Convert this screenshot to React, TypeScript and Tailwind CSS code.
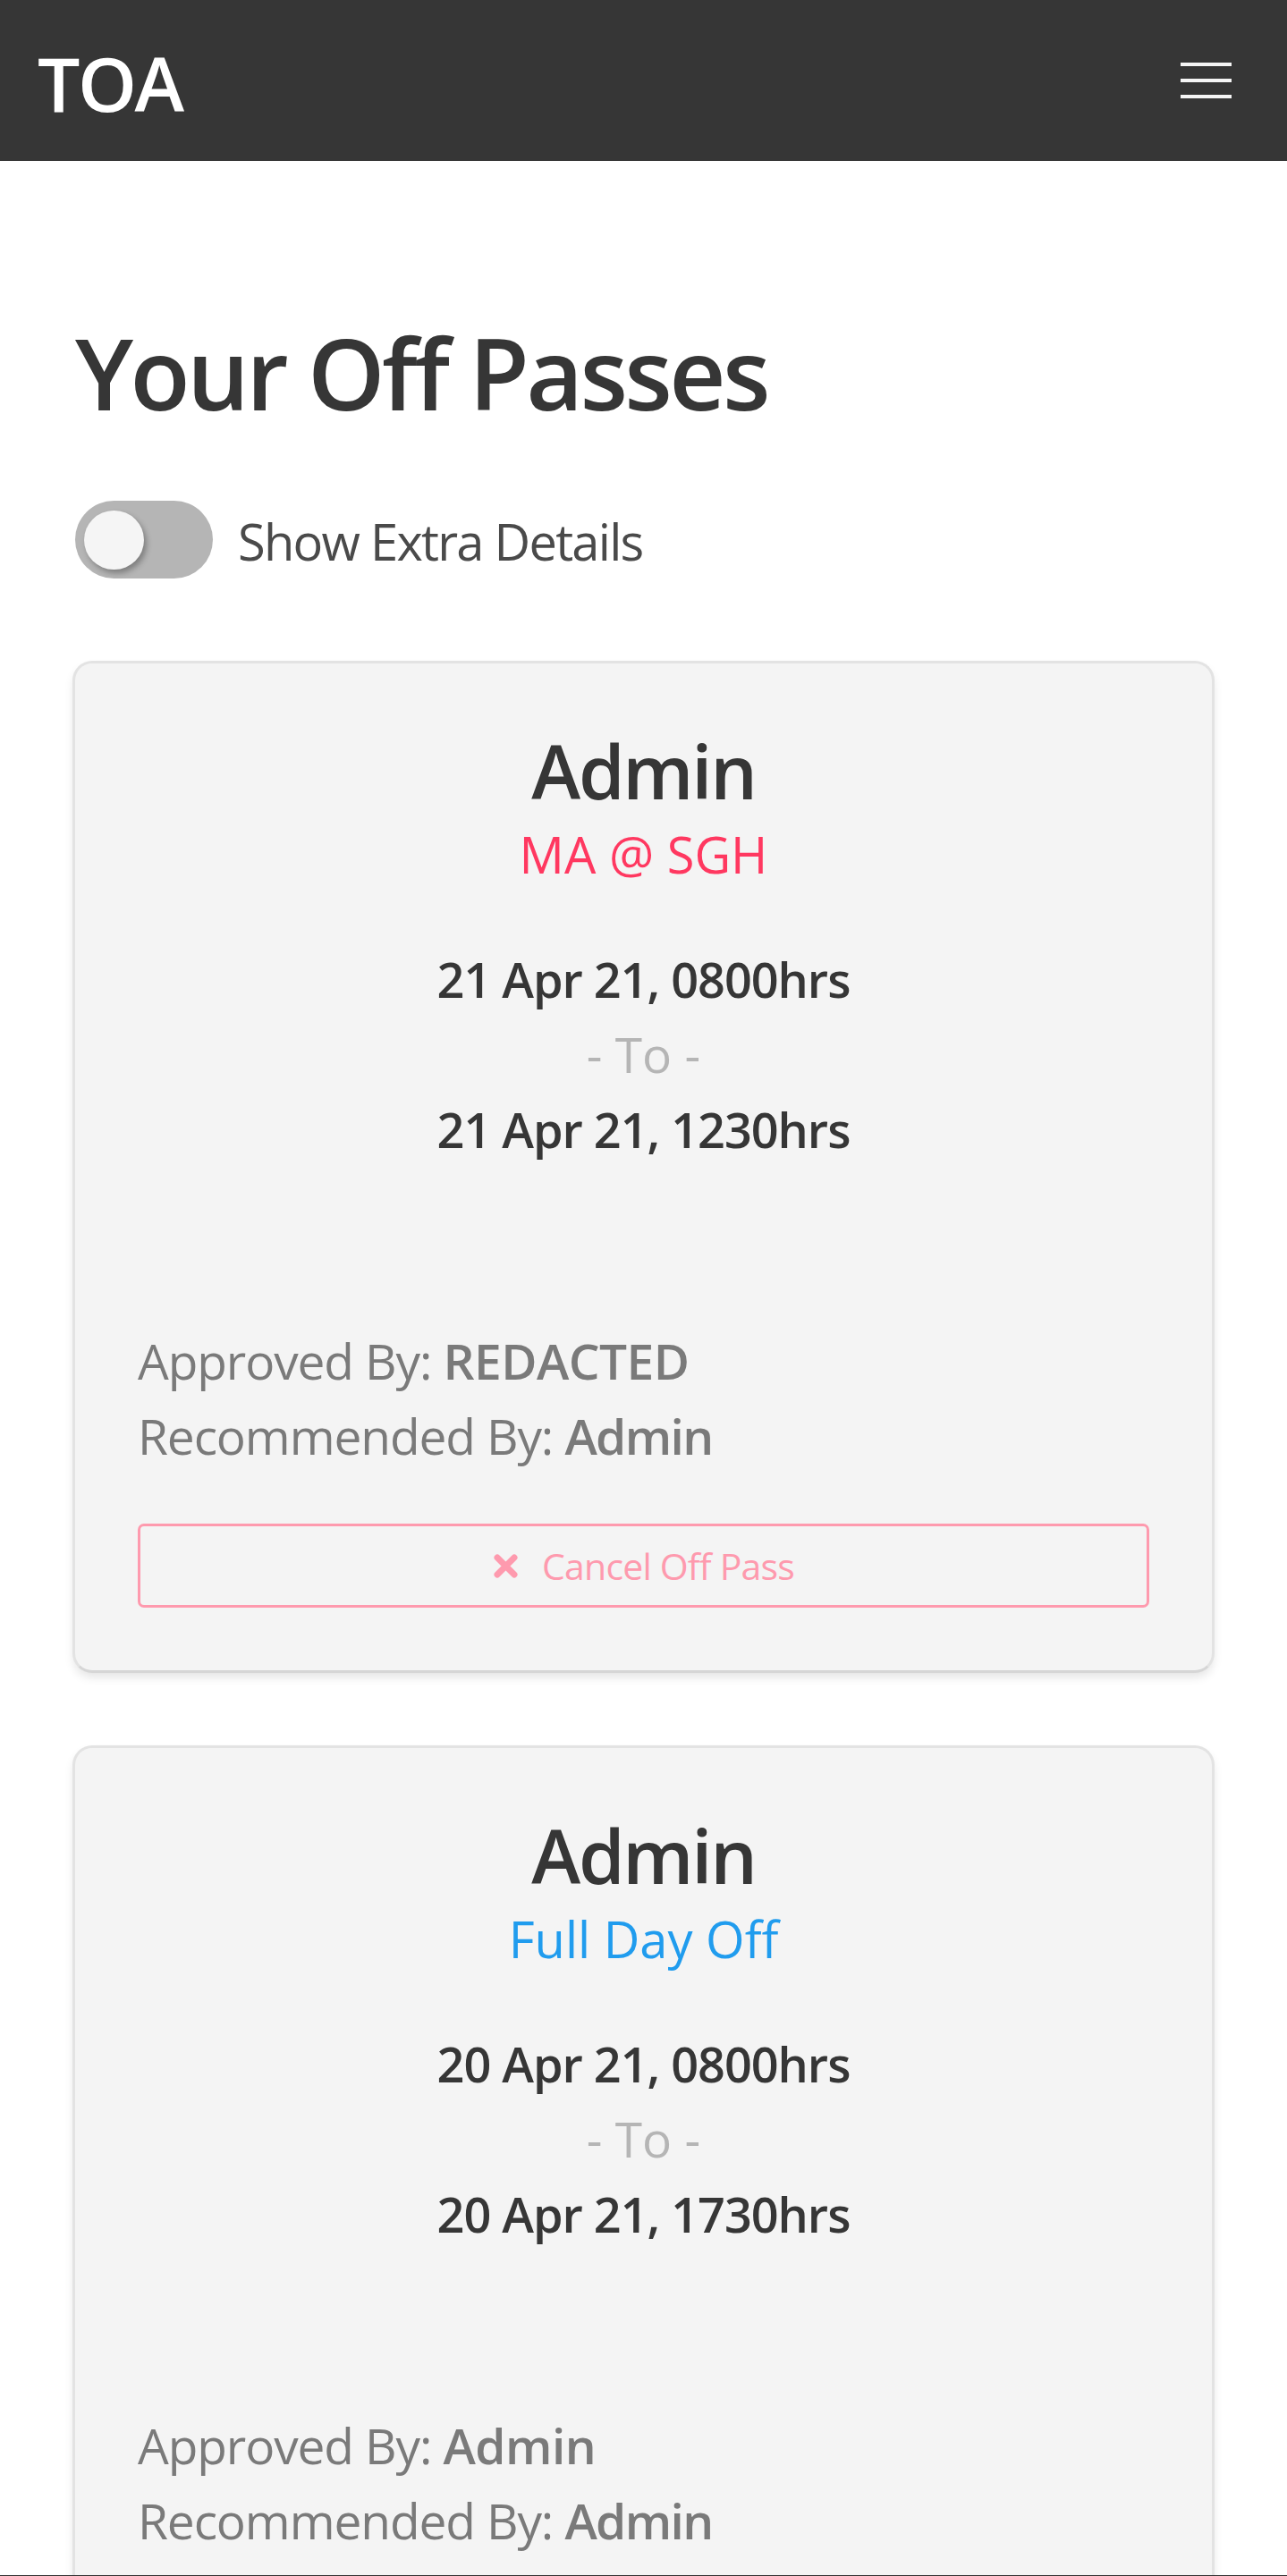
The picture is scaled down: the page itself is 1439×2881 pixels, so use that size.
import React, { useState } from 'react';

interface OffPass {
  id: number;
  name: string;
  type: string;
  typeClass: string;
  from: string;
  to: string;
  approvedBy: string;
  recommendedBy: string;
}

const PASSES: OffPass[] = [
  {
    id: 1,
    name: 'Admin',
    type: 'MA @ SGH',
    typeClass: 'text-[#ff3860]',
    from: '21 Apr 21, 0800hrs',
    to: '21 Apr 21, 1230hrs',
    approvedBy: 'REDACTED',
    recommendedBy: 'Admin',
  },
  {
    id: 2,
    name: 'Admin',
    type: 'Full Day Off',
    typeClass: 'text-[#209cee]',
    from: '20 Apr 21, 0800hrs',
    to: '20 Apr 21, 1730hrs',
    approvedBy: 'Admin',
    recommendedBy: 'Admin',
  },
];

const TimesIcon = () => (
  <svg width="29" height="29" viewBox="0 0 29 29" className="shrink-0">
    <path d="M5 5 L24 24 M24 5 L5 24" stroke="#fe9aae" strokeWidth="7" strokeLinecap="round" fill="none" />
  </svg>
);

const PassCard: React.FC<{ pass: OffPass }> = ({ pass }) => (
  <div className="mx-[81px] rounded-[22px] border-[3px] border-[#e3e3e3] border-b-[#d6d6d6] bg-[#f4f4f4] p-[70px] shadow-[0_6px_12px_-2px_rgba(10,10,10,0.12)]">
    <div className="text-center">
      <div className="text-[83px] leading-[100px] font-semibold text-[#363636] tracking-[-0.027em]">{pass.name}</div>
      <div className={`mt-[1px] text-[56px] leading-[84px] ${pass.typeClass}`}>{pass.type}</div>
      <div className="mt-[56px] text-[54px] leading-[84px] font-semibold text-[#363636] tracking-[-0.019em]">{pass.from}</div>
      <div className="text-[55px] leading-[84px] text-[#b5b5b5]">- To -</div>
      <div className="text-[54px] leading-[84px] font-semibold text-[#363636] tracking-[-0.019em]">{pass.to}</div>
    </div>
    <div className="mt-[175px] text-[55px] leading-[84px] text-[#7a7a7a] tracking-[-0.02em]">
      <div>
        Approved By: <span className="font-semibold tracking-[-0.01em]">{pass.approvedBy}</span>
      </div>
      <div>
        Recommended By: <span className="font-semibold tracking-[-0.03em]">{pass.recommendedBy}</span>
      </div>
    </div>
    <button
      disabled
      className="mt-[56px] flex h-[94px] w-full items-center justify-center gap-[26px] rounded-[7px] border-[3.5px] border-[#fe9aae] bg-transparent text-[41px] leading-none text-[#fe9aae] tracking-[-0.02em]"
    >
      <TimesIcon />
      <span>Cancel Off Pass</span>
    </button>
  </div>
);

export default function App() {
  const [extra, setExtra] = useState(false);

  return (
    <div className="h-[2881px] overflow-hidden border-b border-[#333333] bg-white font-['Open_Sans',sans-serif]">
      <nav className="flex h-[180px] items-start justify-between bg-[#363636]">
        <div className="mt-[51px] pl-[42px] text-[84px] leading-[84px] font-semibold text-white tracking-[-0.03em]">TOA</div>
        <button className="flex h-[180px] w-[182px] flex-col items-center justify-center gap-[14px]">
          <span className="block h-[4px] w-[57px] bg-[#f5f5f5]" />
          <span className="block h-[4px] w-[57px] bg-[#f5f5f5]" />
          <span className="block h-[4px] w-[57px] bg-[#f5f5f5]" />
        </button>
      </nav>

      <section className="pt-[174px]">
        <h1 className="px-[84px] text-[110px] leading-[124px] font-semibold text-[#363636] tracking-[-0.033em]">Your Off Passes</h1>

        <div className="mt-[82px] flex items-start px-[84px]">
          <button
            onClick={() => setExtra(!extra)}
            className={`relative h-[87px] w-[154px] shrink-0 rounded-full ${extra ? 'bg-[#00d1b2]' : 'bg-[#b5b5b5]'}`}
          >
            <span
              className={`absolute top-[11px] h-[66px] w-[67px] rounded-full bg-[#f5f5f5] shadow-[3px_4px_6px_rgba(0,0,0,0.3)] ${extra ? 'left-[77px]' : 'left-[10px]'}`}
            />
          </button>
          <span className="ml-[28px] mt-[3px] text-[56px] leading-[84px] text-[#4a4a4a] tracking-[-0.031em]">Show Extra Details</span>
        </div>

        <div className="mt-[92px] flex flex-col gap-[81px]">
          {PASSES.map(p => (
            <PassCard key={p.id} pass={p} />
          ))}
        </div>
      </section>
    </div>
  );
}
